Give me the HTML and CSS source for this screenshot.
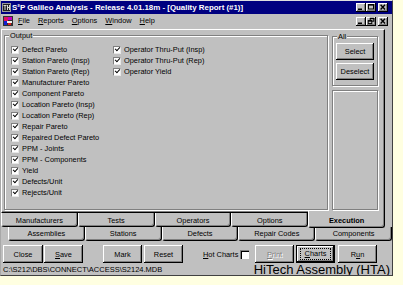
FILE: index.html
```html
<!DOCTYPE html>
<html lang="en">
<head>
<meta charset="utf-8">
<title>S2P Galileo Analysis</title>
<link rel="stylesheet" href="styles.css">
</head>
<body>
<div class="window">
  <div class="titlebar">
    <svg class="app-icon" width="9" height="9" viewBox="0 0 9 9">
      <rect x="0.5" y="0.5" width="8" height="8" fill="#202020" stroke="#9a9a9a"/>
      <rect x="1.5" y="2" width="3" height="1" fill="#d8d8d8"/>
      <rect x="2.5" y="2" width="1" height="5" fill="#d8d8d8"/>
      <rect x="5" y="2" width="1" height="5" fill="#d8d8d8"/>
      <rect x="5" y="4" width="2" height="1" fill="#d8d8d8"/>
      <rect x="7" y="2" width="1" height="5" fill="#d8d8d8"/>
    </svg>
    <span class="title-text">S²P Galileo Analysis - Release 4.01.18m - [Quality Report (#1)]</span>
    <div class="caption-btns">
      <span class="cap-btn"><svg width="10" height="9" viewBox="0 0 10 9"><rect x="2" y="5.5" width="4" height="1.5" fill="#000"/></svg></span>
      <span class="cap-btn"><svg width="10" height="9" viewBox="0 0 10 9"><rect x="2.5" y="1.5" width="5" height="4.5" fill="none" stroke="#000"/><rect x="2" y="1" width="6" height="1.6" fill="#000"/></svg></span>
      <span class="cap-btn gap"><svg width="10" height="9" viewBox="0 0 10 9"><path d="M2.6 1.8L7 6.4M7 1.8L2.6 6.4" stroke="#000" stroke-width="1.4"/></svg></span>
    </div>
  </div>

  <div class="menubar">
    <svg class="doc-icon" width="10" height="10" viewBox="0 0 10 10">
      <rect x="0" y="0" width="10" height="10" fill="#303030"/>
      <rect x="1" y="1" width="4" height="4" fill="#e01060"/>
      <rect x="5" y="1" width="4" height="3" fill="#c000c0"/>
      <rect x="1" y="5" width="3" height="4" fill="#1020d0"/>
      <rect x="4" y="5" width="5" height="2" fill="#f0f0f0"/>
      <rect x="5" y="7" width="3" height="2" fill="#e02020"/>
    </svg>
    <span class="menu-item"><u>F</u>ile</span>
    <span class="menu-item"><u>R</u>eports</span>
    <span class="menu-item"><u>O</u>ptions</span>
    <span class="menu-item"><u>W</u>indow</span>
    <span class="menu-item"><u>H</u>elp</span>
    <div class="caption-btns mdi">
      <span class="cap-btn"><svg width="10" height="9" viewBox="0 0 10 9"><rect x="2" y="5.5" width="4" height="1.5" fill="#000"/></svg></span>
      <span class="cap-btn"><svg width="10" height="9" viewBox="0 0 10 9"><rect x="4.2" y="1.2" width="3.6" height="3" fill="none" stroke="#000"/><rect x="4" y="1" width="4" height="1.2" fill="#000"/><rect x="2.2" y="3.6" width="3.6" height="3" fill="#c0c0c0" stroke="#000"/><rect x="2" y="3.4" width="4" height="1.2" fill="#000"/></svg></span>
      <span class="cap-btn gap"><svg width="10" height="9" viewBox="0 0 10 9"><path d="M2.6 1.8L7 6.4M7 1.8L2.6 6.4" stroke="#000" stroke-width="1.4"/></svg></span>
    </div>
  </div>

  <div class="client">
    <div class="tabctl">
      <div class="panel">
        <div class="group output">
          <span class="glabel">Output</span>
          <ul class="col col1">
            <li class="item"><span class="cb"></span>Defect Pareto</li>
            <li class="item"><span class="cb"></span>Station Pareto (Insp)</li>
            <li class="item"><span class="cb"></span>Station Pareto (Rep)</li>
            <li class="item"><span class="cb"></span>Manufacturer Pareto</li>
            <li class="item"><span class="cb"></span>Component Pareto</li>
            <li class="item"><span class="cb"></span>Location Pareto (Insp)</li>
            <li class="item"><span class="cb"></span>Location Pareto (Rep)</li>
            <li class="item"><span class="cb"></span>Repair Pareto</li>
            <li class="item"><span class="cb"></span>Repaired Defect Pareto</li>
            <li class="item"><span class="cb"></span>PPM - Joints</li>
            <li class="item"><span class="cb"></span>PPM - Components</li>
            <li class="item"><span class="cb"></span>Yield</li>
            <li class="item"><span class="cb"></span>Defects/Unit</li>
            <li class="item"><span class="cb"></span>Rejects/Unit</li>
          </ul>
          <ul class="col col2">
            <li class="item"><span class="cb"></span>Operator Thru-Put (Insp)</li>
            <li class="item"><span class="cb"></span>Operator Thru-Put (Rep)</li>
            <li class="item"><span class="cb"></span>Operator Yield</li>
          </ul>
        </div>
        <div class="side">
          <div class="group all">
            <span class="glabel">All</span>
            <button class="btn sel-btn">Select</button>
            <button class="btn sel-btn">Deselect</button>
          </div>
          <div class="group empty"></div>
        </div>
      </div>
      <div class="tabrow row1">
        <div class="tab">Manufacturers</div>
        <div class="tab">Tests</div>
        <div class="tab">Operators</div>
        <div class="tab">Options</div>
        <div class="tab active">Execution</div>
      </div>
      <div class="tabrow row2">
        <div class="tab">Assemblies</div>
        <div class="tab">Stations</div>
        <div class="tab">Defects</div>
        <div class="tab">Repair Codes</div>
        <div class="tab">Components</div>
      </div>
    </div>

    <div class="btnrow">
      <button class="btn bbtn b-close">Close</button>
      <button class="btn bbtn b-save"><u>S</u>ave</button>
      <button class="btn bbtn b-mark">Mark</button>
      <button class="btn bbtn b-reset">Reset</button>
      <span class="hot"><u>H</u>ot Charts</span>
      <span class="hot-cb"></span>
      <button class="btn bbtn b-print disabled"><u>P</u>rint</button>
      <button class="btn bbtn b-charts default"><span class="focus"><u>C</u>harts</span></button>
      <button class="btn bbtn b-run">R<u>u</u>n</button>
    </div>
  </div>

  <div class="statusbar">
    <span class="path">C:\S212\DBS\CONNECT\ACCESS\S2124.MDB</span>
    <span class="company">HiTech Assembly (HTA)</span>
  </div>
</div>
</body>
</html>
```

FILE: styles.css
```css
* { box-sizing: border-box; margin: 0; padding: 0; }
html, body { width: 403px; height: 285px; overflow: hidden; }
body {
  background: #ffffe1;
  font-family: "Liberation Sans", Arial, sans-serif;
  font-size: 7.4px;
  color: #000;
}

.window {
  width: 393px;
  height: 276px;
  background: #c0c0c0;
  border-top: 1px solid #dfdfdf;
  border-left: 1px solid #a8a8a8;
  border-right: 1px solid #404040;
  border-bottom: 1px solid #404040;
  display: flex;
  flex-direction: column;
  overflow: hidden;
}

/* title bar */
.titlebar {
  height: 13px;
  flex: none;
  background: #000080;
  color: #fff;
  display: flex;
  align-items: center;
}
.app-icon { display: block; flex: none; margin: 0 1px 0 1px; }
.title-text {
  font-weight: bold;
  font-size: 7.9px;
  white-space: nowrap;
}
.caption-btns {
  margin-left: auto;
  margin-right: 4px;
  display: flex;
  flex: none;
}
.cap-btn {
  width: 10px;
  height: 9px;
  background: #c0c0c0;
  box-shadow: inset -1px -1px #000, inset 1px 1px #fff, inset -2px -2px #808080;
  display: block;
}
.cap-btn svg { display: block; }
.cap-btn.gap { margin-left: 2px; }

/* menu bar */
.menubar {
  height: 14px;
  flex: none;
  display: flex;
  align-items: center;
  padding-left: 2px;
}
.doc-icon { display: block; flex: none; margin-right: 1px; }
.menu-item { padding: 0 4px; line-height: 14px; white-space: nowrap; }
.caption-btns.mdi { margin-top: 1px; }

/* client */
.client {
  display: flex;
  flex-direction: column;
  padding-top: 1px;
  flex: none;
}
.tabctl { width: 391px; }
.panel {
  width: 384px;
  height: 184px;
  border-top: 1px solid #fff;
  border-left: 1px solid #fff;
  border-right: 1px solid #000;
  border-bottom: 1px solid #000;
  box-shadow: inset -1px -1px #808080;
  padding: 5px 0 0 2px;
  display: flex;
  gap: 4px;
}

.group {
  position: relative;
  border: 1px solid #808080;
  box-shadow: inset 1px 1px #fff, 1px 1px #fff;
}
.glabel {
  position: absolute;
  top: -5px;
  left: 4px;
  padding: 0 1px;
  background: #c0c0c0;
  line-height: 9px;
  white-space: nowrap;
}

.output {
  width: 324px;
  height: 175px;
  padding: 8px 0 0 6px;
  display: flex;
}
.col { list-style: none; }
.col1 { width: 102px; }
.item {
  height: 11px;
  display: flex;
  align-items: center;
  white-space: nowrap;
}
.cb {
  position: relative;
  flex: none;
  width: 8px;
  height: 8px;
  margin-right: 3px;
  background: #fff;
  border-top: 1px solid #808080;
  border-left: 1px solid #808080;
  border-right: 1px solid #e8e8e8;
  border-bottom: 1px solid #e8e8e8;
}
.cb::after {
  content: "";
  position: absolute;
  left: 1.6px;
  top: -0.4px;
  width: 2px;
  height: 4px;
  border-right: 1.6px solid #000;
  border-bottom: 1.6px solid #000;
  transform: rotate(42deg);
}

.side {
  width: 46px;
  display: flex;
  flex-direction: column;
  gap: 4px;
  padding-top: 1px;
}
.all {
  height: 50px;
  padding-top: 6px;
  display: flex;
  flex-direction: column;
  align-items: center;
  gap: 3px;
}
.empty { height: 120px; }

/* buttons */
.btn {
  font: inherit;
  font-size: 7.4px;
  color: #000;
  background: #c0c0c0;
  border: none;
  box-shadow: inset -1px -1px #000, inset 1px 1px #fff, inset -2px -2px #808080;
  display: flex;
  align-items: center;
  justify-content: center;
  flex: none;
  white-space: nowrap;
}
.sel-btn { width: 38px; height: 17px; }

/* tabs */
.tabrow { display: flex; height: 14px; width: 384px; }
.row1 { align-items: flex-start; }
.row2 { margin-left: 7px; }
.tab {
  flex: 1 1 0;
  height: 14px;
  background: #c0c0c0;
  border-left: 1px solid #fff;
  border-right: 1px solid #000;
  border-bottom: 1px solid #000;
  border-radius: 0 0 3px 3px;
  box-shadow: inset -1px -1px #808080;
  text-align: center;
  white-space: nowrap;
  padding-top: 1px;
  line-height: 12px;
}
.row1 .tab { padding-top: 3px; line-height: 10px; }
.row1 .tab.active {
  font-weight: bold;
  height: 17px;
  margin-top: -2px;
  padding-top: 5px;
  position: relative;
  z-index: 1;
}

/* bottom button row */
.btnrow {
  display: flex;
  align-items: center;
  height: 18px;
  margin-top: 4px;
  padding-left: 2px;
}
.bbtn { width: 39px; height: 18px; }
.b-close { width: 40px; }
.b-save { margin-left: 1px; }
.b-mark { margin-left: 20px; }
.b-reset { margin-left: 2px; }
.hot { margin-left: 20px; width: 37px; white-space: nowrap; }
.hot-cb {
  width: 9px;
  height: 9px;
  background: #fff;
  box-shadow: inset 1px 1px #808080, inset 2px 2px #000;
  flex: none;
}
.b-print { margin-left: 6px; }
.b-charts { margin-left: 2px; }
.b-run { margin-left: 3px; }
.disabled { color: #808080; text-shadow: 1px 1px 0 #fff; }
.default { border: 1px solid #000; }
.focus { outline: 1px dotted #000; outline-offset: 1px; padding: 0 3px; line-height: 8px; }

/* status bar */
.statusbar {
  height: 11px;
  margin-top: 1px;
  padding: 0 2px;
  display: flex;
  align-items: center;
  justify-content: space-between;
  flex: none;
}
.path { font-size: 7.5px; white-space: nowrap; }
.company { font-size: 13px; line-height: 11px; white-space: nowrap; }
```
